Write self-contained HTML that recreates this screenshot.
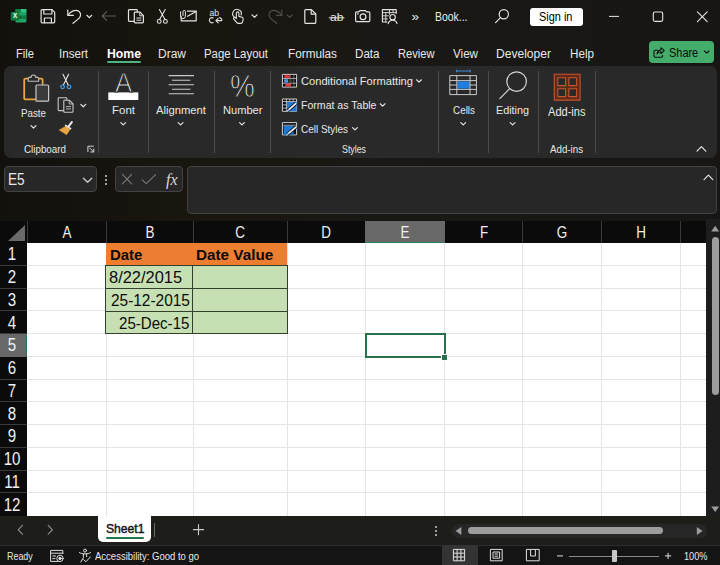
<!DOCTYPE html>
<html><head><meta charset="utf-8"><title>Excel</title>
<style>
html,body{margin:0;padding:0;}
body{width:720px;height:565px;overflow:hidden;position:relative;background:linear-gradient(90deg,#12110d 0%,#19150f 25%,#1a1814 50%,#171614 100%) #14110f;font-family:"Liberation Sans",sans-serif;}
.b{position:absolute;}
.t{position:absolute;white-space:nowrap;transform-origin:0 50%;display:block;}
.t.c{text-align:center;}
svg{position:absolute;left:0;top:0;}
</style></head><body>

<div class="b" style="left:4px;top:66px;width:712.50px;height:92.00px;background:#292929;border-radius:7px;"></div>
<div class="b" style="left:97.5px;top:71px;width:1.00px;height:81.50px;background:#4b4b4b;"></div>
<div class="b" style="left:148.0px;top:71px;width:1.00px;height:81.50px;background:#4b4b4b;"></div>
<div class="b" style="left:213.5px;top:71px;width:1.00px;height:81.50px;background:#4b4b4b;"></div>
<div class="b" style="left:270.0px;top:71px;width:1.00px;height:81.50px;background:#4b4b4b;"></div>
<div class="b" style="left:438.0px;top:71px;width:1.00px;height:81.50px;background:#4b4b4b;"></div>
<div class="b" style="left:488.0px;top:71px;width:1.00px;height:81.50px;background:#4b4b4b;"></div>
<div class="b" style="left:537.5px;top:71px;width:1.00px;height:81.50px;background:#4b4b4b;"></div>
<div class="b" style="left:594.5px;top:71px;width:1.00px;height:81.50px;background:#4b4b4b;"></div>
<div class="b" style="left:107px;top:60.5px;width:34.00px;height:2.50px;background:#4fb37a;border-radius:1.5px;"></div>
<div class="b" style="left:649px;top:41px;width:64.50px;height:22.30px;background:#45ad6c;border-radius:4px;"></div>
<div class="b" style="left:530px;top:8px;width:52.50px;height:17.80px;background:#ffffff;border-radius:3px;"></div>
<div class="b" style="left:4px;top:166px;width:92.70px;height:25.70px;background:#272727;border:1px solid #434343;box-sizing:border-box;border-radius:4px;"></div>
<div class="b" style="left:115.3px;top:166px;width:67.50px;height:25.70px;background:#272727;border:1px solid #434343;box-sizing:border-box;border-radius:4px;"></div>
<div class="b" style="left:186.7px;top:165.7px;width:530.10px;height:48.70px;background:#272727;border:1px solid #434343;box-sizing:border-box;border-radius:4px;"></div>
<div class="b" style="left:105px;top:174.5px;width:2.00px;height:2.00px;background:#d0d0d0;border-radius:1px;"></div>
<div class="b" style="left:105px;top:178.5px;width:2.00px;height:2.00px;background:#d0d0d0;border-radius:1px;"></div>
<div class="b" style="left:105px;top:182.5px;width:2.00px;height:2.00px;background:#d0d0d0;border-radius:1px;"></div>
<div class="b" style="left:0px;top:221px;width:706.00px;height:22.00px;background:#0b0b0b;"></div>
<div class="b" style="left:0px;top:243px;width:27.00px;height:272.60px;background:#0b0b0b;"></div>
<div class="b" style="left:27px;top:242.7px;width:679.00px;height:272.90px;background:#ffffff;"></div>
<div class="b" style="left:105.5px;top:243px;width:1.00px;height:272.60px;background:#e4e4e4;"></div>
<div class="b" style="left:192.5px;top:243px;width:1.00px;height:272.60px;background:#e4e4e4;"></div>
<div class="b" style="left:287.0px;top:243px;width:1.00px;height:272.60px;background:#e4e4e4;"></div>
<div class="b" style="left:364.5px;top:243px;width:1.00px;height:272.60px;background:#e4e4e4;"></div>
<div class="b" style="left:444.0px;top:243px;width:1.00px;height:272.60px;background:#e4e4e4;"></div>
<div class="b" style="left:522.0px;top:243px;width:1.00px;height:272.60px;background:#e4e4e4;"></div>
<div class="b" style="left:601.0px;top:243px;width:1.00px;height:272.60px;background:#e4e4e4;"></div>
<div class="b" style="left:679.5px;top:243px;width:1.00px;height:272.60px;background:#e4e4e4;"></div>
<div class="b" style="left:27px;top:264.85px;width:679.00px;height:1.00px;background:#e4e4e4;"></div>
<div class="b" style="left:27px;top:287.6px;width:679.00px;height:1.00px;background:#e4e4e4;"></div>
<div class="b" style="left:27px;top:310.35px;width:679.00px;height:1.00px;background:#e4e4e4;"></div>
<div class="b" style="left:27px;top:333.1px;width:679.00px;height:1.00px;background:#e4e4e4;"></div>
<div class="b" style="left:27px;top:355.85px;width:679.00px;height:1.00px;background:#e4e4e4;"></div>
<div class="b" style="left:27px;top:378.6px;width:679.00px;height:1.00px;background:#e4e4e4;"></div>
<div class="b" style="left:27px;top:401.35px;width:679.00px;height:1.00px;background:#e4e4e4;"></div>
<div class="b" style="left:27px;top:424.1px;width:679.00px;height:1.00px;background:#e4e4e4;"></div>
<div class="b" style="left:27px;top:446.85px;width:679.00px;height:1.00px;background:#e4e4e4;"></div>
<div class="b" style="left:27px;top:469.6px;width:679.00px;height:1.00px;background:#e4e4e4;"></div>
<div class="b" style="left:27px;top:492.35px;width:679.00px;height:1.00px;background:#e4e4e4;"></div>
<div class="b" style="left:26.5px;top:221px;width:1.00px;height:22.00px;background:#3a3a3a;"></div>
<div class="b" style="left:105.5px;top:221px;width:1.00px;height:22.00px;background:#3a3a3a;"></div>
<div class="b" style="left:192.5px;top:221px;width:1.00px;height:22.00px;background:#3a3a3a;"></div>
<div class="b" style="left:287.0px;top:221px;width:1.00px;height:22.00px;background:#3a3a3a;"></div>
<div class="b" style="left:364.5px;top:221px;width:1.00px;height:22.00px;background:#3a3a3a;"></div>
<div class="b" style="left:444.0px;top:221px;width:1.00px;height:22.00px;background:#3a3a3a;"></div>
<div class="b" style="left:522.0px;top:221px;width:1.00px;height:22.00px;background:#3a3a3a;"></div>
<div class="b" style="left:601.0px;top:221px;width:1.00px;height:22.00px;background:#3a3a3a;"></div>
<div class="b" style="left:679.5px;top:221px;width:1.00px;height:22.00px;background:#3a3a3a;"></div>
<div class="b" style="left:0px;top:264.85px;width:27.00px;height:1.00px;background:#3a3a3a;"></div>
<div class="b" style="left:0px;top:287.6px;width:27.00px;height:1.00px;background:#3a3a3a;"></div>
<div class="b" style="left:0px;top:310.35px;width:27.00px;height:1.00px;background:#3a3a3a;"></div>
<div class="b" style="left:0px;top:333.1px;width:27.00px;height:1.00px;background:#3a3a3a;"></div>
<div class="b" style="left:0px;top:355.85px;width:27.00px;height:1.00px;background:#3a3a3a;"></div>
<div class="b" style="left:0px;top:378.6px;width:27.00px;height:1.00px;background:#3a3a3a;"></div>
<div class="b" style="left:0px;top:401.35px;width:27.00px;height:1.00px;background:#3a3a3a;"></div>
<div class="b" style="left:0px;top:424.1px;width:27.00px;height:1.00px;background:#3a3a3a;"></div>
<div class="b" style="left:0px;top:446.85px;width:27.00px;height:1.00px;background:#3a3a3a;"></div>
<div class="b" style="left:0px;top:469.6px;width:27.00px;height:1.00px;background:#3a3a3a;"></div>
<div class="b" style="left:0px;top:492.35px;width:27.00px;height:1.00px;background:#3a3a3a;"></div>
<div class="b" style="left:365px;top:221px;width:79.50px;height:22.00px;background:#686868;border-bottom:1.5px solid #2f8058;box-sizing:border-box;"></div>
<div class="b" style="left:0px;top:334.1px;width:27.00px;height:22.75px;background:#686868;border-right:1.5px solid #2f7050;box-sizing:border-box;"></div>
<div class="b" style="left:8px;top:224.5px;width:0;height:0;border-left:17px solid transparent;border-bottom:16px solid #6a6a6a;"></div>
<div class="b" style="left:106px;top:243px;width:181.00px;height:22.50px;background:#ed7d31;"></div>
<div class="b" style="left:106px;top:265.5px;width:181.00px;height:68.50px;background:#c6e0b4;"></div>
<div class="b" style="left:105px;top:265px;width:183.00px;height:1.00px;background:#33402b;"></div>
<div class="b" style="left:105px;top:288px;width:183.00px;height:1.00px;background:#33402b;"></div>
<div class="b" style="left:105px;top:311px;width:183.00px;height:1.00px;background:#33402b;"></div>
<div class="b" style="left:105px;top:333px;width:183.00px;height:1.00px;background:#33402b;"></div>
<div class="b" style="left:105px;top:265px;width:1.00px;height:69.00px;background:#33402b;"></div>
<div class="b" style="left:192px;top:265px;width:1.00px;height:69.00px;background:#33402b;"></div>
<div class="b" style="left:287px;top:265px;width:1.00px;height:69.00px;background:#33402b;"></div>
<div class="b" style="left:364.5px;top:333.2px;width:81.00px;height:24.60px;background:transparent;border:2px solid #2a6f4c;box-sizing:border-box;"></div>
<div class="b" style="left:441.3px;top:353.6px;width:5.00px;height:5.00px;background:#2a6f4c;border:1px solid #fff;box-sizing:content-box;"></div>
<div class="b" style="left:706px;top:219px;width:14.00px;height:296.60px;background:#1d1d1d;"></div>
<div class="b" style="left:711.5px;top:237px;width:7.50px;height:158.00px;background:#9c9c9c;border-radius:4px;"></div>
<div class="b" style="left:0px;top:515.6px;width:720.00px;height:29.40px;background:#1d1e1a;"></div>
<div class="b" style="left:0px;top:545px;width:720.00px;height:20.00px;background:#141414;"></div>
<div class="b" style="left:0px;top:544.6px;width:720.00px;height:1.00px;background:#2c2c2c;"></div>
<div class="b" style="left:97.8px;top:515.6px;width:53.60px;height:26.10px;background:#ffffff;border-radius:0 0 5px 5px;"></div>
<div class="b" style="left:105.5px;top:537px;width:38.50px;height:2.00px;background:#1f7a4d;border-radius:1px;"></div>
<div class="b" style="left:154.2px;top:523px;width:1.00px;height:14.00px;background:#6a6a6a;"></div>
<div class="b" style="left:451.5px;top:523.5px;width:255.50px;height:14.50px;background:#262626;border-radius:7.5px;"></div>
<div class="b" style="left:467.5px;top:526.5px;width:195.00px;height:7.50px;background:#9c9c9c;border-radius:4px;"></div>
<div class="b" style="left:435.2px;top:526.1px;width:1.80px;height:1.80px;background:#c8c8c8;border-radius:1px;"></div>
<div class="b" style="left:435.2px;top:530.1px;width:1.80px;height:1.80px;background:#c8c8c8;border-radius:1px;"></div>
<div class="b" style="left:435.2px;top:534.1px;width:1.80px;height:1.80px;background:#c8c8c8;border-radius:1px;"></div>
<div class="b" style="left:441.5px;top:545px;width:36.00px;height:20.00px;background:#333333;"></div>
<div class="b" style="left:568.5px;top:555.5px;width:90.50px;height:1.00px;background:#8a8a8a;"></div>
<div class="b" style="left:611.5px;top:550px;width:5.00px;height:11.50px;background:#c8c8c8;border-radius:1px;"></div>
<svg width="720" height="565" viewBox="0 0 720 565" fill="none" stroke-linecap="round" stroke-linejoin="round" style="font-family:'Liberation Sans',sans-serif">
<!-- ===== title bar ===== -->
<g id="xl">
 <rect x="15.5" y="9" width="10.8" height="13.4" rx="1.2" fill="#21a366"/>
 <rect x="15.5" y="9" width="5.4" height="3.4" fill="#107c41"/>
 <rect x="20.9" y="9" width="5.4" height="3.4" fill="#33c481"/>
 <rect x="20.9" y="12.4" width="5.4" height="3.3" fill="#21a366"/>
 <rect x="15.5" y="15.7" width="10.8" height="3.3" fill="#185c37"/>
 <rect x="20.9" y="15.7" width="5.4" height="3.3" fill="#107c41"/>
 <rect x="10.8" y="12" width="8.6" height="8.6" rx="0.9" fill="#107c41"/>
</g>
<g stroke="#e4e4e4" stroke-width="1.2">
 <!-- save -->
 <path d="M41.1 10.6 a1 1 0 0 1 1-1 H52 L54.7 12.3 V21.8 a1 1 0 0 1-1 1 H42.1 a1 1 0 0 1-1-1 Z"/>
 <path d="M43.8 9.8 V14 H51.9 V9.8"/>
 <path d="M44.4 22.6 V18 H51.4 V22.6"/>
 <!-- undo -->
 <path d="M67.8 10 V15.4 H73.3"/>
 <path d="M68.2 15 C70.5 11.6 75.5 8.8 78.8 11.2 C82 13.8 80.6 17.4 77.6 19.6 L73 23.3"/>
 <path d="M86.9 15.3 L89.3 17.6 L91.7 15.3"/>
 <!-- copy -->
 <path d="M134 21.4 H129.3 a0.8 0.8 0 0 1-0.8-0.8 V10.4 a0.8 0.8 0 0 1 0.8-0.8 H136.5 a0.8 0.8 0 0 1 0.8 0.8 V12"/>
 <path d="M134.3 13 a0.8 0.8 0 0 1 0.8-0.8 H140 L143.4 15.6 V22.1 a0.8 0.8 0 0 1-0.8 0.8 H135.1 a0.8 0.8 0 0 1-0.8-0.8 Z"/>
 <path d="M139.8 12.4 V15.8 H143.2" stroke-width="1"/>
 <path d="M136.8 18 H141 M136.8 20.2 H141" stroke-width="1"/>
 <!-- cut -->
 <path d="M159.4 9.6 L165 19.6 M165.2 9.6 L159.6 19.6" stroke-width="1.1"/>
 <circle cx="159.2" cy="21.4" r="1.9" stroke-width="1.1"/>
 <circle cx="165.4" cy="21.4" r="1.9" stroke-width="1.1"/>
 <!-- mail w/ clip -->
 <path d="M187.5 11.2 H196.2 V20.8 H181.2 V16.5"/>
 <path d="M187.6 16.2 L196 11.5"/>
 <path d="M183 15.6 V11.6 a1.2 1.2 0 0 1 2.4 0 V16.2 a2.4 2.4 0 0 1-4.8 0 V11.8" stroke-width="1"/>
 <!-- replace ab -->
 <path d="M213.2 18 a2.6 2.6 0 1 0 0 4.6" stroke-width="1.1"/>
 <path d="M216 20.6 H221.6 M218.2 18.4 L215.9 20.6 L218.2 22.9 M219.6 17.6 a3.2 3.2 0 0 1 2.4 2.4" stroke-width="1.1"/>
 <!-- touch -->
 <path d="M234.9 17.4 a4.3 4.3 0 1 1 6.2-2.4" stroke-width="1.1"/>
 <path d="M236.3 18.6 V13.2 a1.3 1.3 0 0 1 2.6 0 V16.4 L242 17.2 a1.6 1.6 0 0 1 1.2 1.7 L242.7 21.6 a2.2 2.2 0 0 1-2.2 1.8 H238.6 a2.4 2.4 0 0 1-2-1 L233.6 18.9 a1.1 1.1 0 0 1 1.7-1.3 Z" stroke-width="1.1"/>
 <path d="M252 14.9 L254.5 17.3 L257 14.9"/>
 <!-- new doc -->
 <path d="M304.8 10.6 a1 1 0 0 1 1-1 H311.4 L315.8 14 V22.4 a1 1 0 0 1-1 1 H305.8 a1 1 0 0 1-1-1 Z"/>
 <path d="M311.2 9.8 V14.2 H315.6"/>
 <!-- strike ab line -->
 <path d="M329.2 17.8 H344" stroke-width="1"/>
 <!-- camera -->
 <path d="M355.6 12.8 a1 1 0 0 1 1-1 H358.8 L360 10.6 H365.4 L366.6 11.8 H368.8 a1 1 0 0 1 1 1 V20.6 a1 1 0 0 1-1 1 H356.6 a1 1 0 0 1-1-1 Z"/>
 <circle cx="363" cy="16.8" r="2.9"/>
 <path d="M357.6 13.9 H358.2" stroke-width="1.3"/>
 <!-- sheet + person -->
 <path d="M387 22 H382.4 V9.6 H396.2 V13.4" stroke-width="1.1"/>
 <path d="M382.4 12.6 H396.2 M382.4 15.8 H388.4 M382.4 18.9 H387.4 M385.8 12.6 V22 M389.4 9.6 V14.4 M393 9.6 V12.6" stroke-width="0.9"/>
 <circle cx="392.6" cy="17.2" r="2.7" stroke-width="1.1"/>
 <path d="M388.2 23.6 a4.5 4.2 0 0 1 8.8 0" stroke-width="1.1"/>
 <!-- search -->
 <circle cx="503.8" cy="14.2" r="4.6"/>
 <path d="M500.5 17.6 L495.6 22.6"/>
 <!-- window controls -->
 <path d="M609.4 16.4 H618.6" stroke-width="1"/>
 <rect x="653.3" y="12" width="9.4" height="9.4" rx="1.6" stroke-width="1.1"/>
 <path d="M697.4 11.8 L707.2 21.6 M707.2 11.8 L697.4 21.6" stroke-width="1.1"/>
</g>
<g stroke="#5b5b5b" stroke-width="1.2">
 <!-- back arrow (dim) -->
 <path d="M102.3 16 H115.6 M106.6 11.6 L102.3 16 L106.6 20.4"/>
</g>
<g stroke="#4d4d4d" stroke-width="1.2">
 <!-- redo (dim) -->
 <path d="M281.8 10 V15.4 H276.3"/>
 <path d="M281.4 15 C279.1 11.6 274.1 8.8 270.8 11.2 C267.6 13.8 269 17.4 272 19.6 L276.6 23.3"/>
 <path d="M287.3 15 L289.8 17.4 L292.3 15"/>
</g>
<text x="209.6" y="16.2" font-size="8.6" fill="#e4e4e4" stroke="none">ab</text>
<text x="330" y="21" font-size="11" fill="#e4e4e4" stroke="none" textLength="13.4" lengthAdjust="spacingAndGlyphs">ab</text>
<text x="411.6" y="21.4" font-size="13.5" fill="#e4e4e4" stroke="none">»</text>
<!-- share icon -->
<g stroke="#0d0d0d" stroke-width="1.1">
 <path d="M657.4 50.3 H655.2 a1.2 1.2 0 0 0-1.2 1.2 V56 a1.2 1.2 0 0 0 1.2 1.2 H661.4 a1.2 1.2 0 0 0 1.2-1.2 V55.2"/>
 <path d="M657 54 C657.4 51.4 659 50.1 661 49.9 V47.7 L664.3 50.7 L661 53.7 V51.7 C659.4 51.8 658 52.4 657 54 Z"/>
 <path d="M704.4 51 L706.7 53.2 L709 51"/>
</g>
</svg>

<svg width="720" height="565" viewBox="0 0 720 565" fill="none" stroke-linecap="round" stroke-linejoin="round" style="font-family:'Liberation Sans',sans-serif">
<!-- ===== ribbon: clipboard ===== -->
<g>
 <!-- paste -->
 <path d="M28.6 78.6 H25.4 a1.2 1.2 0 0 0-1.2 1.2 V98.2 a1.2 1.2 0 0 0 1.2 1.2 H35.2 M38.2 78.6 H41.4 a1.2 1.2 0 0 1 1.2 1.2 V84" stroke="#e9a53f" stroke-width="1.8"/>
 <path d="M28.2 81.2 V78.4 a1 1 0 0 1 1-1 H31 a2.4 2.4 0 0 1 4.8 0 H37.6 a1 1 0 0 1 1 1 V81.2 Z" stroke="#bdbdbd" stroke-width="1.1" fill="#292929"/>
 <rect x="36" y="85" width="12.6" height="16.2" rx="1" stroke="#c9c9c9" stroke-width="1.2" fill="#3b3b3b"/>
 <path d="M31 125.6 L33.5 128 L36 125.6" stroke="#e4e4e4" stroke-width="1.2"/>
 <!-- cut -->
 <path d="M63 74.2 L68.2 85 M68.6 74.2 L63.4 85" stroke="#e4e4e4" stroke-width="1.1"/>
 <circle cx="62.6" cy="86.8" r="1.8" stroke="#4f9fe6" stroke-width="1.2"/>
 <circle cx="69" cy="86.8" r="1.8" stroke="#4f9fe6" stroke-width="1.2"/>
 <!-- copy -->
 <g stroke="#c9c9c9" stroke-width="1.1">
  <path d="M63.4 110.6 H59 a0.8 0.8 0 0 1-0.8-0.8 V98.6 a0.8 0.8 0 0 1 0.8-0.8 H66 a0.8 0.8 0 0 1 0.8 0.8 V99.8"/>
  <path d="M63.8 101 a0.8 0.8 0 0 1 0.8-0.8 H69.4 L73 103.8 V111.4 a0.8 0.8 0 0 1-0.8 0.8 H64.6 a0.8 0.8 0 0 1-0.8-0.8 Z"/>
  <path d="M69.2 100.4 V104 H72.8 M66.4 106.6 H70.6 M66.4 108.9 H70.6" stroke-width="0.9"/>
 </g>
 <path d="M80.8 104.4 L83.3 106.8 L85.8 104.4" stroke="#e4e4e4" stroke-width="1.2"/>
 <!-- format painter -->
 <path d="M66.2 126.2 L59.4 130 L66.6 134.6 L70 129.2 Z" fill="#e9a53f" stroke="#e9a53f" stroke-width="0.8"/>
 <path d="M65.6 125.4 L70.6 128.6" stroke="#e4e4e4" stroke-width="1.6"/>
 <path d="M68.6 126.4 L71.8 122.2" stroke="#e4e4e4" stroke-width="2.2"/>
 <!-- dialog launcher -->
 <path d="M93.4 146.2 H87.9 V151.7 M89.8 148.1 L93.6 151.9 M93.8 149 V152 H90.8" stroke="#d4d4d4" stroke-width="1"/>
</g>
<!-- font -->
<rect x="108.3" y="92.4" width="30" height="7.6" fill="#ffffff"/>
<!-- alignment -->
<path d="M168.6 75.6 H194 M172 80.2 H190.4 M168.6 84.8 H194 M172 89.3 H190.4 M168.6 93.8 H194" stroke="#c9c9c9" stroke-width="1.1" stroke-linecap="butt"/>
<!-- chevrons under labels -->
<g stroke="#e4e4e4" stroke-width="1.2">
 <path d="M120.8 122.6 L123.2 124.9 L125.6 122.6"/>
 <path d="M178.2 122.6 L180.6 124.9 L183 122.6"/>
 <path d="M239.6 122.6 L242 124.9 L244.4 122.6"/>
 <path d="M460.8 122.6 L463.2 124.9 L465.6 122.6"/>
 <path d="M510.2 122.6 L512.6 124.9 L515 122.6"/>
 <path d="M416.6 79.8 L419 82.1 L421.4 79.8"/>
 <path d="M380.2 103.8 L382.6 106.1 L385 103.8"/>
 <path d="M352.6 127.6 L355 129.9 L357.4 127.6"/>
 <path d="M697 151.1 L701.4 146.7 L705.8 151.1"/>
 <path d="M704 179.6 L708.4 175.2 L712.8 179.6"/>
</g>
<!-- styles icons -->
<g stroke-linecap="butt">
 <rect x="282.4" y="74.4" width="14.2" height="12.7" fill="#0a0a0a" stroke="#d0d0d0" stroke-width="1"/>
 <path d="M282.4 78.4 H296.6 M282.4 83.2 H296.6" stroke="#c4c4c4" stroke-width="0.9"/>
 <path d="M290.2 74.4 V87.1 M293.9 74.4 V87.1" stroke="#8f8f8f" stroke-width="0.8"/>
 <rect x="284.2" y="75.2" width="5.6" height="2.6" fill="#ea3a3c"/>
 <rect x="284.2" y="79.2" width="3.8" height="3.4" fill="#4a97e6"/>
 <rect x="288.4" y="79.2" width="3.8" height="3.4" fill="#3a3a3a"/>
 <rect x="285.3" y="83.9" width="5.8" height="2.5" fill="#ea3a3c"/>

 <rect x="282.4" y="99" width="14.2" height="12.3" fill="#0a0a0a" stroke="#d0d0d0" stroke-width="1"/>
 <rect x="286.6" y="101.8" width="10" height="9.5" fill="#1f78d1"/>
 <path d="M282.4 101.6 H296.6 M282.4 104.9 H286.6 M282.4 108.1 H286.6 M286.4 99 V111.3 M289.8 99 V101.6 M293.2 99 V101.6" stroke="#c4c4c4" stroke-width="0.9"/>
 <path d="M287.6 110.8 L296 103.4" stroke="#0f1a2a" stroke-width="3.4"/>
 <path d="M288.6 109.9 L296 103.4" stroke="#f0f0f0" stroke-width="1.7"/>
 <path d="M286.8 111.3 L289 109.6" stroke="#7fbaf0" stroke-width="1.6"/>

 <rect x="282.4" y="122.6" width="14.2" height="12.3" fill="#0a0a0a" stroke="#d0d0d0" stroke-width="1"/>
 <rect x="283.6" y="125.6" width="10" height="9.3" fill="#1f78d1"/>
 <path d="M283.2 125.2 H296.6" stroke="#c4c4c4" stroke-width="0.8"/>
 <path d="M287.2 134.6 L296.2 126.8" stroke="#0f1a2a" stroke-width="3.4"/>
 <path d="M288.2 133.7 L296.2 126.8" stroke="#f0f0f0" stroke-width="1.7"/>
 <path d="M286.4 135.2 L288.6 133.4" stroke="#7fbaf0" stroke-width="1.6"/>
</g>
<!-- cells -->
<g stroke-linecap="butt">
 <rect x="457.4" y="81.4" width="12.2" height="7.2" fill="#1f7fe0"/>
 <path d="M449.8 75.6 H476.4 V94.6 H449.8 Z M449.8 80.6 H476.4 M449.8 89.4 H476.4 M456.8 75.6 V94.6 M470 75.6 V94.6 M449.8 85 H456.8 M470 85 H476.4" stroke="#c9c9c9" stroke-width="1"/>
 <path d="M456.4 71 H470.2 M456.4 69.6 V72.4 M470.2 69.6 V72.4" stroke="#3f8fe0" stroke-width="1"/>
</g>
<!-- editing -->
<circle cx="516.6" cy="81.6" r="9.8" stroke="#d6d6d6" stroke-width="1.2"/>
<path d="M509.4 88.8 L499.8 98.6" stroke="#d6d6d6" stroke-width="1.2"/>
<!-- add-ins -->
<rect x="554.3" y="74.3" width="25.8" height="25.8" fill="#5f2a17" stroke="#c9542d" stroke-width="1.1"/>
<g fill="#292929" stroke="#c9542d" stroke-width="1.1">
 <rect x="557.8" y="77.8" width="7.8" height="7.8"/><rect x="568.8" y="77.8" width="7.8" height="7.8"/>
 <rect x="557.8" y="88.8" width="7.8" height="7.8"/><rect x="568.8" y="88.8" width="7.8" height="7.8"/>
</g>
<!-- ===== formula bar ===== -->
<path d="M83.4 178.2 L87.6 182.2 L91.8 178.2" stroke="#d4d4d4" stroke-width="1.2"/>
<path d="M122.4 174.4 L131.6 183.8 M131.6 174.4 L122.4 183.8" stroke="#7a7a7a" stroke-width="1.1"/>
<path d="M142 179.6 L146.2 183.6 L155.6 174.6" stroke="#7a7a7a" stroke-width="1.1"/>
<!-- ===== scrollbars ===== -->
<path d="M715.2 225.8 L719.2 231.4 H711.2 Z" fill="#9c9c9c"/>
<path d="M715.2 512 L719.2 506.4 H711.2 Z" fill="#9c9c9c"/>
<path d="M455.6 531 L461.4 527 V535 Z" fill="#9c9c9c"/>
<path d="M702.6 531 L696.8 527 V535 Z" fill="#9c9c9c"/>
<!-- ===== sheet tab bar ===== -->
<path d="M22.4 525.4 L18.2 529.8 L22.4 534.2 M48.2 525.4 L52.4 529.8 L48.2 534.2" stroke="#8c8c8c" stroke-width="1.2"/>
<path d="M193.4 529.6 H203.6 M198.5 524.5 V534.7" stroke="#c9c9c9" stroke-width="1.1"/>
<!-- ===== status bar ===== -->
<g stroke="#e0e0e0" stroke-width="1">
 <!-- macro/record icon -->
 <path d="M58 561.4 H50.6 V550.4 H62.8 V553.6 M50.6 553.2 H62.8 M52.8 556 H55.6 M52.8 558.6 H55"/>
 <circle cx="60" cy="558.4" r="3.2"/><circle cx="60" cy="558.4" r="1.2" fill="#e0e0e0"/>
 <!-- accessibility -->
 <circle cx="85" cy="550.6" r="1.5"/>
 <path d="M79.4 552.6 C82 554.4 88 554.4 90.6 552.6 M83.4 554 V557.6 L80.8 562 M86.6 554 V556.6 M83.6 559.6 L85.8 561.8 L90.4 557"/>
 <!-- view icons -->
 <path d="M453.4 549.4 H464.6 V560.8 H453.4 Z M453.4 553.2 H464.6 M453.4 557 H464.6 M457.1 549.4 V560.8 M460.9 549.4 V560.8" stroke-linecap="butt"/>
 <path d="M490.4 549.4 H502.2 V560.8 H490.4 Z M493 552 H499.6 V558.2 H493 Z M494.6 554 H498 M494.6 556.2 H498" stroke-linecap="butt"/>
 <path d="M526.4 549.4 H539.2 V560.8 H526.4 Z M530.6 549.4 V556 H535.4 V549.4" stroke-linecap="butt"/>
 <path d="M557 555.9 H563 M665 555.9 H671.2 M668.1 552.8 V559" stroke-linecap="butt"/>
</g>
</svg>

<span class="t" style="left:434.50px;top:8.50px;line-height:16px;font-size:12px;color:#e8e8e8;font-weight:400;transform:scaleX(0.8699);">Book...</span>
<span class="t" style="left:539.40px;top:8.50px;line-height:16px;font-size:12.5px;color:#000;font-weight:400;transform:scaleX(0.8736);">Sign in</span>
<span class="t" style="left:16.00px;top:45.50px;line-height:16px;font-size:12.5px;color:#e8e8e8;font-weight:400;transform:scaleX(0.8930);">File</span>
<span class="t" style="left:59.00px;top:45.50px;line-height:16px;font-size:12.5px;color:#e8e8e8;font-weight:400;transform:scaleX(0.9275);">Insert</span>
<span class="t" style="left:158.00px;top:45.50px;line-height:16px;font-size:12.5px;color:#e8e8e8;font-weight:400;transform:scaleX(0.9598);">Draw</span>
<span class="t" style="left:204.00px;top:45.50px;line-height:16px;font-size:12.5px;color:#e8e8e8;font-weight:400;transform:scaleX(0.9116);">Page Layout</span>
<span class="t" style="left:288.00px;top:45.50px;line-height:16px;font-size:12.5px;color:#e8e8e8;font-weight:400;transform:scaleX(0.9406);">Formulas</span>
<span class="t" style="left:355.00px;top:45.50px;line-height:16px;font-size:12.5px;color:#e8e8e8;font-weight:400;transform:scaleX(0.9278);">Data</span>
<span class="t" style="left:397.50px;top:45.50px;line-height:16px;font-size:12.5px;color:#e8e8e8;font-weight:400;transform:scaleX(0.8902);">Review</span>
<span class="t" style="left:452.50px;top:45.50px;line-height:16px;font-size:12.5px;color:#e8e8e8;font-weight:400;transform:scaleX(0.9302);">View</span>
<span class="t" style="left:496.00px;top:45.50px;line-height:16px;font-size:12.5px;color:#e8e8e8;font-weight:400;transform:scaleX(0.9652);">Developer</span>
<span class="t" style="left:570.00px;top:45.50px;line-height:16px;font-size:12.5px;color:#e8e8e8;font-weight:400;transform:scaleX(0.9332);">Help</span>
<span class="t" style="left:107.00px;top:45.50px;line-height:16px;font-size:12.5px;color:#ffffff;font-weight:700;transform:scaleX(0.9789);">Home</span>
<span class="t" style="left:669.00px;top:44.60px;line-height:16px;font-size:12.5px;color:#0a0a0a;font-weight:400;transform:scaleX(0.8753);">Share</span>
<span class="t" style="left:21.00px;top:105.50px;line-height:15px;font-size:11.5px;color:#e8e8e8;font-weight:400;transform:scaleX(0.8497);">Paste</span>
<span class="t" style="left:24.00px;top:142.00px;line-height:14px;font-size:10.5px;color:#e8e8e8;font-weight:400;transform:scaleX(0.9343);">Clipboard</span>
<span class="t" style="left:112.00px;top:102.50px;line-height:15px;font-size:11.5px;color:#e8e8e8;font-weight:400;transform:scaleX(0.9993);">Font</span>
<span class="t" style="left:156.00px;top:102.50px;line-height:15px;font-size:11.5px;color:#e8e8e8;font-weight:400;transform:scaleX(0.9777);">Alignment</span>
<span class="t" style="left:222.50px;top:102.50px;line-height:15px;font-size:11.5px;color:#e8e8e8;font-weight:400;transform:scaleX(0.9656);">Number</span>
<span class="t" style="left:300.50px;top:73.50px;line-height:15px;font-size:11.5px;color:#e8e8e8;font-weight:400;transform:scaleX(0.9680);">Conditional Formatting</span>
<span class="t" style="left:300.50px;top:98.00px;line-height:15px;font-size:11.5px;color:#e8e8e8;font-weight:400;transform:scaleX(0.9179);">Format as Table</span>
<span class="t" style="left:300.50px;top:121.50px;line-height:15px;font-size:11.5px;color:#e8e8e8;font-weight:400;transform:scaleX(0.8651);">Cell Styles</span>
<span class="t" style="left:342.00px;top:142.00px;line-height:14px;font-size:10.5px;color:#e8e8e8;font-weight:400;transform:scaleX(0.8393);">Styles</span>
<span class="t" style="left:452.50px;top:102.50px;line-height:15px;font-size:11.5px;color:#e8e8e8;font-weight:400;transform:scaleX(0.8606);">Cells</span>
<span class="t" style="left:496.00px;top:102.50px;line-height:15px;font-size:11.5px;color:#e8e8e8;font-weight:400;transform:scaleX(0.9382);">Editing</span>
<span class="t" style="left:548.00px;top:103.50px;line-height:16px;font-size:12px;color:#e8e8e8;font-weight:400;transform:scaleX(0.9217);">Add-ins</span>
<span class="t" style="left:550.00px;top:142.00px;line-height:14px;font-size:10.5px;color:#e8e8e8;font-weight:400;transform:scaleX(0.9267);">Add-ins</span>
<span class="t" style="left:8.30px;top:169.10px;line-height:21px;font-size:16.5px;color:#e8e8e8;font-weight:400;transform:scaleX(0.8272);">E5</span>
<span class="t" style="left:166.00px;top:168.50px;line-height:21px;font-size:16px;color:#d8d8d8;font-weight:400;font-family:'Liberation Serif',serif;font-style:italic;transform:scaleX(0.9959);">fx</span>
<span class="t" style="left:110.00px;top:245.30px;line-height:20px;font-size:15.5px;color:#0c0c0c;font-weight:700;transform:scaleX(0.9640);">Date</span>
<span class="t" style="left:196.40px;top:245.30px;line-height:20px;font-size:15.5px;color:#0c0c0c;font-weight:700;transform:scaleX(0.9846);">Date Value</span>
<span class="t" style="left:108.90px;top:267.40px;line-height:21px;font-size:16px;color:#0c0c0c;font-weight:400;transform:scaleX(1.0269);">8/22/2015</span>
<span class="t" style="left:110.50px;top:290.10px;line-height:21px;font-size:16px;color:#0c0c0c;font-weight:400;transform:scaleX(0.9640);">25-12-2015</span>
<span class="t" style="left:119.00px;top:312.90px;line-height:21px;font-size:16px;color:#0c0c0c;font-weight:400;transform:scaleX(0.9424);">25-Dec-15</span>
<span class="t" style="left:105.50px;top:519.50px;line-height:17px;font-size:13px;color:#161616;font-weight:400;-webkit-text-stroke:0.45px #161616;transform:scaleX(0.9320);">Sheet1</span>
<span class="t" style="left:7.00px;top:549.00px;line-height:14px;font-size:10.5px;color:#e8e8e8;font-weight:400;transform:scaleX(0.8498);">Ready</span>
<span class="t" style="left:95.30px;top:549.00px;line-height:14px;font-size:10.5px;color:#e8e8e8;font-weight:400;transform:scaleX(0.9053);">Accessibility: Good to go</span>
<span class="t" style="left:683.50px;top:549.00px;line-height:14px;font-size:10.5px;color:#e8e8e8;font-weight:400;transform:scaleX(0.8749);">100%</span>
<span class="t" style="left:114.60px;top:65.40px;line-height:36px;font-size:27.5px;color:#ffffff;font-weight:400;-webkit-text-stroke:1.1px #292929;transform:scaleX(0.9376);">A</span>
<span class="t" style="left:230.40px;top:65.30px;line-height:42px;font-size:32px;color:#ffffff;font-weight:400;-webkit-text-stroke:1.1px #292929;transform:scaleX(0.8716);">%</span>
<span class="t" style="left:13.00px;top:11.40px;line-height:10px;font-size:7.5px;color:#ffffff;font-weight:700;transform:scaleX(0.8374);">X</span>
<span class="t c" style="left:36.50px;width:60px;top:222.10px;line-height:21px;font-size:16px;color:#f0f0f0;font-weight:400;transform-origin:50% 50%;transform:scaleX(0.84);">A</span>
<span class="t c" style="left:119.50px;width:60px;top:222.10px;line-height:21px;font-size:16px;color:#f0f0f0;font-weight:400;transform-origin:50% 50%;transform:scaleX(0.84);">B</span>
<span class="t c" style="left:210.25px;width:60px;top:222.10px;line-height:21px;font-size:16px;color:#f0f0f0;font-weight:400;transform-origin:50% 50%;transform:scaleX(0.84);">C</span>
<span class="t c" style="left:296.25px;width:60px;top:222.10px;line-height:21px;font-size:16px;color:#f0f0f0;font-weight:400;transform-origin:50% 50%;transform:scaleX(0.84);">D</span>
<span class="t c" style="left:374.75px;width:60px;top:222.10px;line-height:21px;font-size:16px;color:#f0f0f0;font-weight:400;transform-origin:50% 50%;transform:scaleX(0.84);">E</span>
<span class="t c" style="left:453.50px;width:60px;top:222.10px;line-height:21px;font-size:16px;color:#f0f0f0;font-weight:400;transform-origin:50% 50%;transform:scaleX(0.84);">F</span>
<span class="t c" style="left:532.00px;width:60px;top:222.10px;line-height:21px;font-size:16px;color:#f0f0f0;font-weight:400;transform-origin:50% 50%;transform:scaleX(0.84);">G</span>
<span class="t c" style="left:610.75px;width:60px;top:222.10px;line-height:21px;font-size:16px;color:#f0f0f0;font-weight:400;transform-origin:50% 50%;transform:scaleX(0.84);">H</span>
<span class="t c" style="left:-18.20px;width:60px;top:243.38px;line-height:23px;font-size:17.5px;color:#f0f0f0;font-weight:400;transform-origin:50% 50%;transform:scaleX(0.86);">1</span>
<span class="t c" style="left:-18.20px;width:60px;top:266.12px;line-height:23px;font-size:17.5px;color:#f0f0f0;font-weight:400;transform-origin:50% 50%;transform:scaleX(0.86);">2</span>
<span class="t c" style="left:-18.20px;width:60px;top:288.88px;line-height:23px;font-size:17.5px;color:#f0f0f0;font-weight:400;transform-origin:50% 50%;transform:scaleX(0.86);">3</span>
<span class="t c" style="left:-18.20px;width:60px;top:311.62px;line-height:23px;font-size:17.5px;color:#f0f0f0;font-weight:400;transform-origin:50% 50%;transform:scaleX(0.86);">4</span>
<span class="t c" style="left:-18.20px;width:60px;top:334.38px;line-height:23px;font-size:17.5px;color:#f0f0f0;font-weight:400;transform-origin:50% 50%;transform:scaleX(0.86);">5</span>
<span class="t c" style="left:-18.20px;width:60px;top:357.12px;line-height:23px;font-size:17.5px;color:#f0f0f0;font-weight:400;transform-origin:50% 50%;transform:scaleX(0.86);">6</span>
<span class="t c" style="left:-18.20px;width:60px;top:379.88px;line-height:23px;font-size:17.5px;color:#f0f0f0;font-weight:400;transform-origin:50% 50%;transform:scaleX(0.86);">7</span>
<span class="t c" style="left:-18.20px;width:60px;top:402.62px;line-height:23px;font-size:17.5px;color:#f0f0f0;font-weight:400;transform-origin:50% 50%;transform:scaleX(0.86);">8</span>
<span class="t c" style="left:-18.20px;width:60px;top:425.38px;line-height:23px;font-size:17.5px;color:#f0f0f0;font-weight:400;transform-origin:50% 50%;transform:scaleX(0.86);">9</span>
<span class="t c" style="left:-18.20px;width:60px;top:448.12px;line-height:23px;font-size:17.5px;color:#f0f0f0;font-weight:400;transform-origin:50% 50%;transform:scaleX(0.86);">10</span>
<span class="t c" style="left:-18.20px;width:60px;top:470.88px;line-height:23px;font-size:17.5px;color:#f0f0f0;font-weight:400;transform-origin:50% 50%;transform:scaleX(0.86);">11</span>
<span class="t c" style="left:-18.20px;width:60px;top:493.62px;line-height:23px;font-size:17.5px;color:#f0f0f0;font-weight:400;transform-origin:50% 50%;transform:scaleX(0.86);">12</span>
</body></html>
